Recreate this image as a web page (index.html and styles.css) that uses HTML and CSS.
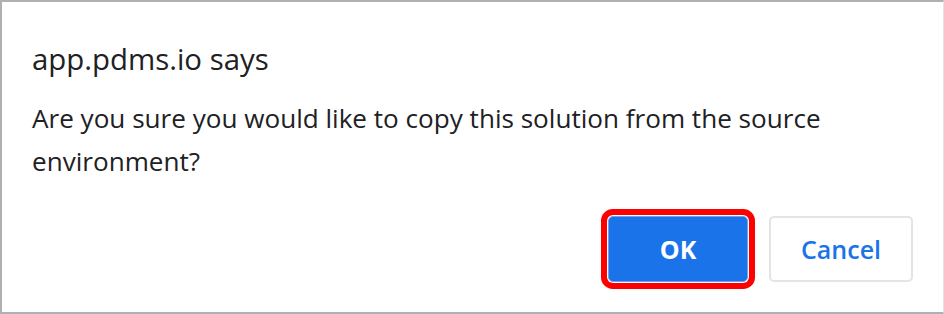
FILE: index.html
```html
<!DOCTYPE html>
<html lang="en">
<head>
<meta charset="utf-8">
<title>app.pdms.io says</title>
<link rel="stylesheet" href="styles.css">
</head>
<body>
<div class="dialog">
  <div class="title">app.pdms.io says</div>
  <div class="message">Are you sure you would like to copy this solution from the source environment?</div>
  <div class="actions">
    <button class="btn btn-ok">OK</button>
    <button class="btn btn-cancel">Cancel</button>
  </div>
</div>
</body>
</html>
```

FILE: styles.css
```css
html, body {
  margin: 0;
  padding: 0;
  background: #ffffff;
}
.dialog {
  width: 944px;
  height: 314px;
  box-sizing: border-box;
  border-top: 2px solid #b0b0b0;
  border-left: 2px solid #b0b0b0;
  border-bottom: 2px solid #b0b0b0;
  border-right: 1px solid #e4e4e4;
  padding: 0 30px 0 30px;
  display: flex;
  flex-direction: column;
  font-family: "Open Sans", "Noto Sans", sans-serif;
  color: #202124;
}
.title {
  font-size: 29.4px;
  line-height: 40px;
  margin-top: 37px;
}
.message {
  font-size: 26.1px;
  line-height: 43px;
  margin-top: 18px;
  width: 860px;
}
.actions {
  display: flex;
  justify-content: flex-end;
  gap: 21px;
  margin-top: 33px;
}
.btn {
  font-family: "Open Sans", "Noto Sans", sans-serif;
  font-size: 25px;
  height: 66px;
  border-radius: 5px;
  cursor: pointer;
}
.btn-ok {
  width: 140px;
  background: #1a73e8;
  color: #ffffff;
  font-weight: 700;
  border: 1px solid #6ea2f0;
  box-shadow: 0 0 0 1px #ffffff, 0 0 0 7px #ff0000;
}
.btn-cancel {
  width: 144px;
  background: #ffffff;
  color: #1a73e8;
  font-weight: 600;
  border: 2px solid #e3e4e8;
}
```
